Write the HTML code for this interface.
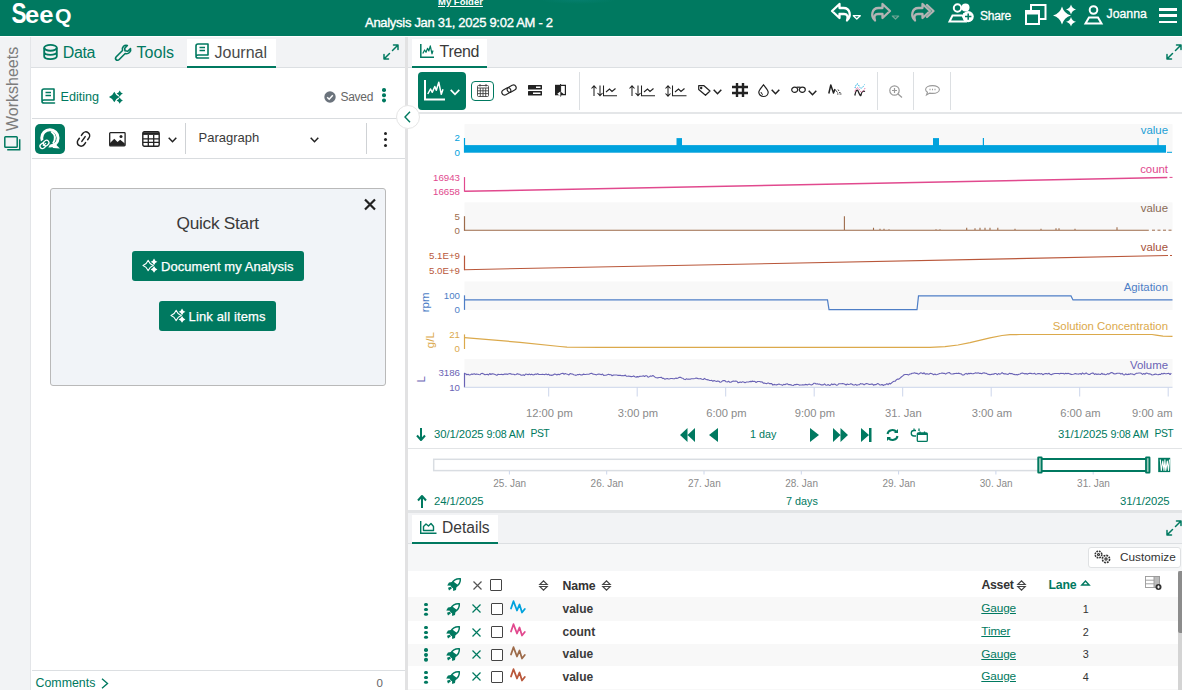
<!DOCTYPE html>
<html lang="en">
<head>
<meta charset="utf-8">
<title>Seeq Analysis</title>
<style>
*{box-sizing:border-box;margin:0;padding:0}
html,body{width:1182px;height:690px;overflow:hidden;background:#fff}
body{font-family:"Liberation Sans",sans-serif;font-size:13px;color:#333;position:relative}
.abs{position:absolute}
.t{position:absolute;white-space:nowrap;line-height:1}
svg{position:absolute;overflow:visible}
#hdr{left:0;top:0;width:1182px;height:36px;background:#007960}
#rail{left:0;top:36px;width:31px;height:654px;background:#f2f3f5;border-right:1px solid #e3e5e8}
#ltabs{left:31px;top:36px;width:375px;height:32px;background:#f2f3f5;border-bottom:1px solid #dcdfe2}
#rtabs{left:409px;top:36px;width:773px;height:32px;background:#f2f3f5;border-bottom:1px solid #dcdfe2}
#dtabs{left:409px;top:512px;width:773px;height:32px;background:#f2f3f5;border-bottom:1px solid #dcdfe2}
.tab{position:absolute;background:#fff;border-bottom:2px solid #007960}
.g{color:#007960}
.tabtxt{font-size:16.5px;color:#007960}
.hl{position:absolute;height:1px;background:#dcdfe2}
.vl{position:absolute;width:1px;background:#dcdfe2}
.btn{position:absolute;background:#007960;border-radius:3px}
.row{position:absolute;left:409px;width:763px;height:23px}
.row.alt{background:#f8f8f8}
</style>
</head>
<body>
<!-- HEADER -->
<div id="hdr" class="abs">
<div class="abs" style="left:540px;top:0;width:76px;height:4px;background:radial-gradient(ellipse 50% 100% at 50% 0,rgba(12,134,128,0.4),rgba(0,121,96,0) 100%)"></div>
<svg width="70" height="30" style="left:10px;top:0" viewBox="0 0 70 30" role="img" aria-label="Seeq"><title>Seeq</title>
<text y="23" font-family="Liberation Sans, sans-serif" font-weight="700" fill="#fff"><tspan x="1.5" font-size="29" textLength="15" lengthAdjust="spacingAndGlyphs">S</tspan><tspan x="15.1" font-size="24.5" textLength="28.5" lengthAdjust="spacingAndGlyphs">ee</tspan><tspan x="45" font-size="20" textLength="16.5" lengthAdjust="spacingAndGlyphs">Q</tspan></text>
</svg>
<div class="t" style="left:438px;top:-3.5px;font-size:9.5px;font-weight:700;color:#fff;text-decoration:underline">My Folder</div>
<div class="t" style="left:365px;top:16.2px;font-size:13px;color:#fff;letter-spacing:-0.29px;-webkit-text-stroke:0.35px #fff">Analysis Jan 31, 2025 9:02 AM - 2</div>
<!-- undo -->
<svg style="left:831px;top:3px" width="31" height="19" viewBox="0 0 31 19" fill="none" stroke="#fff" stroke-width="2.3" stroke-linejoin="round">
<path d="M8.5 1 L1 8 L8.5 15 V11 H13 C16 11 17.5 13 16 17.5 C20.5 13.5 19.5 5 12.5 5 H8.5 Z"/>
<path d="M22.3 12.7 h7 l-3.5 3.3 z" fill="none" stroke="#fff" stroke-width="1.3"/></svg>
<!-- redo -->
<svg style="left:871px;top:3px" width="29" height="19" viewBox="0 0 29 19" fill="none" stroke="#b3b3b3" stroke-width="2.3" stroke-linejoin="round">
<path d="M11.5 1 L19 8 L11.5 15 V11 H7 C4 11 2.5 13 4 17.5 C-0.5 13.5 0.500 5 7.5 5 H11.5 Z"/>
<path d="M21.3 13 h6.4 l-3.2 3 z" fill="none" stroke="#6fa595" stroke-width="1.2"/></svg>
<!-- redo all -->
<svg style="left:911px;top:3px" width="24" height="19" viewBox="0 0 24 19" fill="none" stroke="#b3b3b3" stroke-width="2.3" stroke-linejoin="round">
<path d="M11.500 1 L19 8 L11.500 15 V11 H7 C4 11 2.500 13 4 17.500 C-0.500 13.500 0.500 5 7.500 5 H11.500 Z"/>
<path d="M16 2 L22.500 8 L16 14" stroke-linecap="round"/></svg>
<!-- share -->
<svg style="left:948px;top:3px" width="27" height="21" viewBox="0 0 27 21" fill="none" stroke="#fff" stroke-width="2">
<circle cx="17.500" cy="4.500" r="4" fill="#fff" stroke="none"/>
<path d="M15 10 h6 l1 4 h-6z" fill="#fff" stroke="none"/>
<circle cx="9.500" cy="5" r="3.700"/>
<path d="M4.500 12.500 H14.500 L17.500 18.500 H1.500 Z" fill="#007960"/>
<circle cx="20.2" cy="13.6" r="5.6" fill="#fff" stroke="none"/>
<path d="M17 13.6 h6.4 M20.2 10.4 v6.400" stroke="#007960" stroke-width="1.500"/></svg>
<div class="t" style="left:980px;top:9.5px;font-size:12px;color:#fff;letter-spacing:-0.2px;-webkit-text-stroke:0.3px #fff">Share</div>
<!-- copy -->
<svg style="left:1025px;top:4px" width="22" height="21" viewBox="0 0 22 21" fill="none" stroke="#fff" stroke-width="2">
<path d="M6 6 V1 H20.500 V15 H15"/>
<rect x="1" y="7" width="13" height="13"/>
<path d="M1 9 H14" stroke-width="3"/></svg>
<!-- sparkle -->
<svg style="left:1054px;top:5px" width="22" height="21" viewBox="0 0 22 21" fill="#fff">
<path d="M8 1.5 Q10 8.5 17 10.5 Q10 12.5 8 19.5 Q6 12.5 -1 10.5 Q6 8.5 8 1.5Z"/>
<path d="M17 -0.5 Q18 3.500 22 4.500 Q18 5.500 17 9.5 Q16 5.500 12 4.500 Q16 3.500 17 -0.5Z"/>
<path d="M17 12 Q18 16 22 16.800 Q18 17.700 17 21.5 Q16 17.700 12 16.800 Q16 16 17 12Z"/></svg>
<!-- user -->
<svg style="left:1084px;top:5px" width="19" height="20" viewBox="0 0 19 20" fill="none" stroke="#fff" stroke-width="2">
<circle cx="9.500" cy="5" r="3.800"/>
<path d="M5 12.500 H14 L17.500 18.500 H1.500 Z"/></svg>
<div class="t" style="left:1106.5px;top:8px;font-size:12.3px;color:#fff;-webkit-text-stroke:0.3px #fff">Joanna</div>
<!-- hamburger -->
<div class="abs" style="left:1158.5px;top:8.3px;width:18.5px;height:2.8px;background:#fff"></div>
<div class="abs" style="left:1158.5px;top:14.4px;width:18.5px;height:2.8px;background:#fff"></div>
<div class="abs" style="left:1158.5px;top:20.5px;width:18.5px;height:2.8px;background:#fff"></div>
</div>
<div class="abs" style="left:0;top:36px;width:1182px;height:1px;background:#fff;z-index:5"></div>
<!-- LEFT RAIL -->
<div id="rail" class="abs">
<div class="t" style="left:-29.5px;top:44.5px;width:84px;font-size:16px;color:#7d7d7d;transform:rotate(-90deg);transform-origin:center;text-align:left">Worksheets</div>
<svg style="left:4px;top:100px" width="17" height="15" viewBox="0 0 17 15" fill="none" stroke="#007960" stroke-width="1.500"><rect x="0.800" y="0.800" width="12.400" height="10.400" rx="0.800"/><path d="M15.700 3.200 V13.700 H3.200"/></svg>
</div>
<!-- LEFT PANEL -->
<div id="ltabs" class="abs">
<svg style="left:11.8px;top:8px" width="15" height="16" viewBox="0 0 15 16" fill="none" stroke="#007960" stroke-width="1.85"><ellipse cx="7.500" cy="3.800" rx="6.300" ry="2.900"/><path d="M1.200 3.800 V12.200 C1.200 16 13.800 16 13.800 12.200 V3.800 M1.200 8 C1.200 11.800 13.800 11.800 13.800 8"/></svg>
<div class="t tabtxt" style="left:31.7px;top:8.7px;font-size:16px;letter-spacing:-0.35px">Data</div>
<svg style="left:84px;top:8px" width="17" height="17" viewBox="0 0 17 17" fill="none" stroke="#007960" stroke-width="1.600" stroke-linejoin="round"><path d="M15.500 4.500 L12.800 7.200 L10 6.800 L9.700 4.200 L12.400 1.500 C9.500 0.500 6.500 3 7.500 6.500 L1.500 12.500 C0.300 13.700 0.300 14.800 1 15.600 C1.800 16.500 3.200 16.500 4.200 15.500 L10.200 9.500 C13.500 10.500 16.500 7.500 15.500 4.500Z"/></svg>
<div class="t tabtxt" style="left:105.6px;top:8.7px;font-size:16px">Tools</div>
<div class="tab" style="left:156px;top:3px;width:89px;height:29px"></div>
<svg style="left:164px;top:7px" width="15" height="16" viewBox="0 0 15 16"><path d="M1 12.500 V3 Q1 1 3 1 H13 V12 H3 Q1 12 1 13.500 Q1 15 3 15 H13.500" fill="none" stroke="#007960" stroke-width="1.600" stroke-linejoin="round" stroke-linecap="round"/><path d="M4.500 4.500 H10 M4.500 7.500 H10" stroke="#007960" stroke-width="1.600" fill="none"/></svg>
<div class="t tabtxt" style="left:183.5px;top:8.7px;font-size:16px;color:#4a4a4a">Journal</div>
<svg style="left:352px;top:8px" width="16" height="16" viewBox="0 0 16 16" fill="none" stroke="#007960" stroke-width="1.500" stroke-linecap="round" stroke-linejoin="round"><path d="M9.500 6.500 L15 1 M10.500 1 H15 V5.500 M6.500 9.500 L1 15 M1 10.500 V15 H5.500"/></svg>
</div>
<!-- left panel body -->
<div class="vl" style="left:405px;top:36px;width:3px;height:654px;background:#e2e2e3"></div>
<svg style="left:40.500px;top:87.500px" width="15" height="16" viewBox="0 0 15 16"><path d="M1 12.500 V3 Q1 1 3 1 H13 V12 H3 Q1 12 1 13.500 Q1 15 3 15 H13.500" fill="none" stroke="#007960" stroke-width="1.600" stroke-linejoin="round" stroke-linecap="round"/><path d="M4.500 4.500 H10 M4.500 7.500 H10" stroke="#007960" stroke-width="1.600" fill="none"/></svg>
<div class="t g" style="left:60.5px;top:91px;font-size:12.6px">Editing</div>
<svg style="left:108.500px;top:90.500px" width="14" height="12" viewBox="0 0 22 21"><path d="M8 1.2 Q10.6 7.9 17.3 10.5 Q10.6 13.1 8 19.8 Q5.400 13.1 -1.3 10.5 Q5.400 7.9 8 1.2Z" fill="#007960"/><path d="M17.5 -1 Q18.9 3.1 23 4.5 Q18.9 5.9 17.5 10 Q16.1 5.9 12 4.5 Q16.1 3.1 17.5 -1Z" fill="#007960"/><path d="M17.5 11.5 Q18.9 15.400 23 16.800 Q18.9 18.200 17.5 22.300 Q16.1 18.200 12 16.800 Q16.1 15.400 17.5 11.5Z" fill="#007960"/></svg>
<svg style="left:323.500px;top:90.500px" width="12" height="12" viewBox="0 0 12 12"><circle cx="6" cy="6" r="5.700" fill="#6b737c"/><path d="M3.200 6.200 L5.200 8.200 L8.800 4.200" fill="none" stroke="#fff" stroke-width="1.500"/></svg>
<div class="t" style="left:340.5px;top:91.2px;font-size:12px;letter-spacing:-0.3px;color:#666">Saved</div>
<div class="abs" style="left:382px;top:88.200px;width:3.600px;height:3.600px;border-radius:50%;background:#007960;box-shadow:0 5.200px 0 #007960,0 10.400px 0 #007960"></div>
<div class="hl" style="left:32px;top:118px;width:373px;background:#d9dcdf"></div>
<div class="btn" style="left:35px;top:124px;width:30px;height:30px;border-radius:5px"></div>
<svg style="left:35px;top:124px" width="30" height="30" viewBox="0 0 30 30" fill="none" stroke="#fff"><circle cx="14.9" cy="13.9" r="8.2" stroke-width="2.9"/><path d="M16.3 7.6 Q22.6 12.5 18 19.5" stroke-width="1.9"/><path d="M15.5 20.8 L19.5 19 L24.8 24.6 L18.2 24 Z" fill="#fff" stroke="none"/><g transform="rotate(-40 10 20)"><rect x="4" y="17" width="9.5" height="6" rx="3" fill="#007960" stroke="#007960" stroke-width="3"/><rect x="4.200" y="17.600" width="5.800" height="4.800" rx="2.400" stroke-width="1.300"/><rect x="8.600" y="17.600" width="5.800" height="4.800" rx="2.400" stroke-width="1.300" fill="#007960"/><path d="M7.200 20 H11.400" stroke-width="1.200"/></g></svg>
<svg style="left:74.500px;top:130px" width="17" height="18" viewBox="0 0 17 18" fill="none" stroke="#222" stroke-width="1.500" stroke-linecap="round"><g transform="rotate(-55 8.500 9)"><path d="M6.700 5.200 H4.400 A3.800 3.800 0 0 0 4.400 12.800 H6.700 M10.300 5.200 H12.600 A3.800 3.800 0 0 1 12.600 12.800 H10.300"/><path d="M5.600 9 H11.400"/></g></svg>
<svg style="left:108.500px;top:131.800px" width="17" height="15" viewBox="0 0 17 15"><rect x="0.700" y="0.700" width="15.400" height="13.200" rx="0.800" fill="none" stroke="#222" stroke-width="1.300"/><path d="M1 13.700 V11 L5.300 6.800 L8.500 10 L11.200 7.800 L15.800 11.600 V13.700Z" fill="#222"/><circle cx="12" cy="4.600" r="1.500" fill="#222"/></svg>
<svg style="left:142px;top:131px" width="18" height="16" viewBox="0 0 18 16" fill="none" stroke="#222"><rect x="0.8" y="0.8" width="16.4" height="14.4" rx="1.5" stroke-width="1.4"/><path d="M1 2.6 H17" stroke-width="2.6"/><path d="M1 7.800 H17 M1 11.400 H17 M6.300 4 V15 M11.700 4 V15" stroke-width="1.300"/></svg>
<svg style="left:167.500px;top:137px" width="9" height="6" viewBox="0 0 9 6" fill="none" stroke="#222" stroke-width="1.500"><path d="M0.700 0.700 L4.500 4.700 L8.300 0.700"/></svg>
<div class="vl" style="left:185px;top:123px;height:31px;background:#cfd2d5"></div>
<div class="t" style="left:198.500px;top:131px;font-size:13px;color:#3a3a3a">Paragraph</div>
<svg style="left:309.500px;top:137px" width="9" height="6" viewBox="0 0 9 6" fill="none" stroke="#222" stroke-width="1.500"><path d="M0.700 0.700 L4.500 4.700 L8.300 0.700"/></svg>
<div class="vl" style="left:366px;top:123px;height:31px;background:#cfd2d5"></div>
<div class="abs" style="left:384px;top:132px;width:3px;height:3px;border-radius:50%;background:#222;box-shadow:0 6px 0 #222,0 12px 0 #222"></div>
<div class="hl" style="left:32px;top:158px;width:373px;background:#d9dcdf"></div>
<!-- quick start -->
<div class="abs" style="left:50px;top:188px;width:336px;height:198px;background:#f1f4f8;border:1px solid #b9b9b9;border-radius:3px"></div>
<svg style="left:364px;top:198.500px" width="12" height="11" viewBox="0 0 12 11" stroke="#222" stroke-width="2.200"><path d="M1 0.500 L11 10.500 M11 0.500 L1 10.500"/></svg>
<div class="t" style="left:176.5px;top:215px;font-size:17.3px;letter-spacing:-0.28px;color:#3a3a3a">Quick Start</div>
<div class="btn" style="left:132px;top:251px;width:172px;height:30px"></div>
<svg style="left:143px;top:259px" width="14" height="13" viewBox="0 0 22 21"><path d="M8 2.2 Q10.3 8.2 16.3 10.5 Q10.3 12.8 8 18.8 Q5.700 12.8 -0.3 10.5 Q5.700 8.2 8 2.2Z" fill="none" stroke="#fff" stroke-width="2" stroke-linejoin="round"/><path d="M17.5 -1 Q18.9 3.1 23 4.5 Q18.9 5.9 17.5 10 Q16.1 5.9 12 4.5 Q16.1 3.1 17.5 -1Z" fill="#fff"/><path d="M17.5 11.5 Q18.9 15.400 23 16.800 Q18.9 18.200 17.5 22.300 Q16.1 18.200 12 16.800 Q16.1 15.400 17.5 11.5Z" fill="#fff"/></svg>
<div class="t" style="left:161px;top:259.500px;font-size:13px;color:#fff;-webkit-text-stroke:0.250px #fff;letter-spacing:0.050px">Document my Analysis</div>
<div class="btn" style="left:159px;top:301px;width:117px;height:30px"></div>
<svg style="left:170.500px;top:309px" width="14" height="13" viewBox="0 0 22 21"><path d="M8 2.2 Q10.3 8.2 16.3 10.5 Q10.3 12.8 8 18.8 Q5.700 12.8 -0.3 10.5 Q5.700 8.2 8 2.2Z" fill="none" stroke="#fff" stroke-width="2" stroke-linejoin="round"/><path d="M17.5 -1 Q18.9 3.1 23 4.5 Q18.9 5.9 17.5 10 Q16.1 5.9 12 4.5 Q16.1 3.1 17.5 -1Z" fill="#fff"/><path d="M17.5 11.5 Q18.9 15.400 23 16.800 Q18.9 18.200 17.5 22.300 Q16.1 18.200 12 16.800 Q16.1 15.400 17.5 11.5Z" fill="#fff"/></svg>
<div class="t" style="left:188.500px;top:309.500px;font-size:13px;color:#fff;-webkit-text-stroke:0.250px #fff;letter-spacing:0.150px">Link all items</div>
<!-- comments -->
<div class="hl" style="left:32px;top:669.500px;width:373px;height:1.500px;background:#dcdfe2"></div>
<div class="t g" style="left:35.500px;top:676.500px;font-size:12.400px">Comments</div>
<svg style="left:101px;top:678px" width="8" height="11" viewBox="0 0 8 11" fill="none" stroke="#007960" stroke-width="1.400"><path d="M1 0.700 L6.500 5.500 L1 10.300"/></svg>
<div class="t" style="left:376.500px;top:677.500px;font-size:11.500px;color:#666">0</div>
<!-- collapse circle -->
<div class="abs" style="left:395.5px;top:104.5px;width:24px;height:24px;border-radius:50%;background:#fff;border:1px solid #e6e6e6;z-index:6"></div>
<svg style="left:404px;top:110.5px;z-index:7" width="7" height="12" viewBox="0 0 7 12" fill="none" stroke="#007960" stroke-width="1.400"><path d="M6 0.700 L1 6 L6 11.300"/></svg>

<!-- RIGHT PANEL -->
<!--RIGHT-->
<div id="rtabs" class="abs" style="left:408px;width:774px">
<div class="tab" style="left:4px;top:3px;width:75px;height:29px"></div>
<svg style="left:12px;top:8px" width="14" height="14" viewBox="0 0 14 14" fill="none" stroke="#007960" stroke-width="1.500"><path d="M0.800 0 V13.200 H14"/><path d="M2.800 9.500 L4.600 6 L6 8.300 L7.600 4.300 L8.800 7 L10.300 1.800 L12 9.800 L13 6.500" stroke-width="1.200" stroke-linejoin="round"/></svg>
<div class="t tabtxt" style="left:31.500px;top:8.200px;font-size:16px;letter-spacing:-0.300px;color:#3a3a3a">Trend</div>
<svg style="left:757.500px;top:8px" width="16" height="16" viewBox="0 0 16 16" fill="none" stroke="#007960" stroke-width="1.500" stroke-linecap="round" stroke-linejoin="round"><path d="M9.500 6.500 L15 1 M10.500 1 H15 V5.500 M6.500 9.500 L1 15 M1 10.500 V15 H5.500"/></svg>
</div>
<div class="btn" style="left:418px;top:72px;width:48px;height:38px;border-radius:4px"></div>
<svg style="left:423.500px;top:80px" width="21" height="21" viewBox="0 0 21 21" fill="none" stroke="#fff" stroke-width="2"><path d="M1 0 V19.500 H21"/><path d="M3.800 14 L6.500 9 L8.300 12.300 L10.800 6.500 L12.300 10.300 L14.800 2.300 L17.300 14.300 L19 9.300" stroke-width="1.500" stroke-linejoin="round"/></svg>
<svg style="left:449.500px;top:88.500px" width="10" height="7" viewBox="0 0 10 7" fill="none" stroke="#fff" stroke-width="1.700"><path d="M0.700 0.800 L5 5.300 L9.300 0.800"/></svg>
<div class="abs" style="left:471px;top:81px;width:23px;height:20px;border:1px solid #007960;border-radius:4px"></div>
<svg style="left:476.500px;top:84px" width="12" height="13" viewBox="0 0 12 13" fill="none" stroke="#3a3a3a" stroke-width="0.850"><rect x="0.500" y="1.500" width="11" height="11" rx="1"/><path d="M0.500 4 H11.500 M0.500 6.800 H11.500 M0.500 9.600 H11.500 M3.300 4 V12.500 M6 4 V12.500 M8.700 4 V12.500 M3 0 V2.500 M9 0 V2.500"/></svg>
<svg style="left:500.500px;top:83px" width="16" height="14" viewBox="0 0 16 14" fill="none" stroke="#222" stroke-width="1.150" stroke-linecap="round"><g transform="rotate(-28 8 7)"><rect x="0.300" y="4.300" width="9.400" height="5.400" rx="2.700"/><rect x="6.300" y="4.300" width="9.400" height="5.400" rx="2.700"/></g></svg>
<svg style="left:527.500px;top:85px" width="14" height="11" viewBox="0 0 14 11"><rect x="0" y="0" width="14" height="4.500" rx="0.500" fill="#222"/><rect x="0" y="6" width="14" height="4.500" rx="0.500" fill="#222"/><rect x="8" y="1.500" width="4.500" height="1.500" fill="#fff"/><rect x="5" y="7.500" width="7.500" height="1.500" fill="#fff"/></svg>
<svg style="left:554.500px;top:84px" width="12" height="13" viewBox="0 0 12 13"><rect x="0" y="0.800" width="5.500" height="10.500" fill="#222"/><path d="M6 1.400 H10.400 V10.700 H6" fill="none" stroke="#222" stroke-width="1.200"/><path d="M5.600 0 V12.500" stroke="#222" stroke-width="1"/><path d="M5.300 7.500 L2.300 9.700 L5.300 11.900Z" fill="#fff"/><path d="M8.500 9.700 L6 8 V11.400Z" fill="#222"/></svg>
<div class="vl" style="left:579px;top:72px;height:38px"></div>
<svg style="left:591px;top:85px" width="26" height="12" viewBox="0 0 26 12" fill="none" stroke="#222" stroke-width="1.050"><path d="M3 11 V1 M0.500 3.500 L3 0.800 L5.500 3.500"/><path d="M9 0.500 V10.500 M6.500 8 L9 10.700 L11.500 8"/><path d="M12.500 0.500 V10.800 H26"/><path d="M15 7 L18.500 4 L21 6.500 L24.500 3.500" stroke-width="1.100"/></svg>
<svg style="left:628.5px;top:85px" width="26" height="12" viewBox="0 0 26 12" fill="none" stroke="#222" stroke-width="1.050"><path d="M3 11 V1 M0.500 3.500 L3 0.800 L5.500 3.500"/><path d="M9 0.500 V10.500 M6.500 8 L9 10.700 L11.500 8"/><path d="M12.500 0.500 V10.800 H26"/><path d="M15 7 L18.500 4 L21 6.500 L24.500 3.500" stroke-width="1.100"/></svg>
<svg style="left:665px;top:85px" width="22" height="12" viewBox="0 0 22 12" fill="none" stroke="#222" stroke-width="1.050"><path d="M3 1 V11 M0.500 3.500 L3 0.800 L5.500 3.500 M0.500 8.500 L3 11.200 L5.500 8.500"/><path d="M7.500 0.500 V10.800 H21.500"/><path d="M10 7 L13.500 4 L16 6.500 L19.500 3.500" stroke-width="1.100"/></svg>
<svg style="left:697.500px;top:84.500px" width="13" height="11" viewBox="0 0 13 11" fill="none" stroke="#222" stroke-width="1.200" stroke-linejoin="round"><path d="M0.700 0.700 H6 L12 6 L7.500 10.300 L0.700 4.500Z"/><circle cx="3.200" cy="3" r="0.600" fill="#222"/></svg>
<svg style="left:712.5px;top:88.5px" width="9" height="6" viewBox="0 0 9 6" fill="none" stroke="#222" stroke-width="1.500"><path d="M0.700 0.700 L4.500 4.700 L8.300 0.700"/></svg>
<svg style="left:731.500px;top:83px" width="16" height="14" viewBox="0 0 16 14" fill="none" stroke="#222" stroke-width="2.400"><path d="M5 0 V14 M11 0 V14 M0 4 H16 M0 10 H16"/></svg>
<svg style="left:758px;top:83.500px" width="11" height="13" viewBox="0 0 11 13" fill="none" stroke="#222" stroke-width="1.200"><path d="M5.500 0.800 C8 4 10.200 6 10.200 8.300 A4.700 4.200 0 0 1 0.800 8.300 C0.800 6 3 4 5.500 0.800Z"/><path d="M3 8 Q3 10 5 10.500" stroke-width="1"/></svg>
<svg style="left:771px;top:89px" width="9" height="6" viewBox="0 0 9 6" fill="none" stroke="#222" stroke-width="1.500"><path d="M0.700 0.700 L4.500 4.700 L8.300 0.700"/></svg>
<svg style="left:791px;top:86px" width="15" height="7" viewBox="0 0 15 7" fill="none" stroke="#222" stroke-width="1.200"><ellipse cx="3.700" cy="3.800" rx="3" ry="2.600"/><ellipse cx="11.300" cy="3.800" rx="3" ry="2.600"/><path d="M5.500 1.200 H9.500"/></svg>
<svg style="left:808px;top:90px" width="9" height="6" viewBox="0 0 9 6" fill="none" stroke="#222" stroke-width="1.500"><path d="M0.700 0.700 L4.500 4.700 L8.300 0.700"/></svg>
<svg style="left:828px;top:84px" width="14" height="12" viewBox="0 0 14 12" fill="none" stroke="#222"><path d="M0.800 9.500 L2.800 1 L5.500 9 L7 5" stroke-width="1.500" stroke-linejoin="round"/><path d="M7.500 6 L9.500 8.500 M10 5.500 L11 7 M9 10 H10.500 M11.500 10 H13.500 M11 8.500 L12.500 8.500" stroke-width="1" stroke="#444"/></svg>
<svg style="left:854px;top:83px" width="12" height="14" viewBox="0 0 12 14" fill="none"><path d="M1 5 Q3 -2 5 3 T10.500 1.500" stroke="#00a2dd" stroke-width="1" stroke-dasharray="1.200 1"/><path d="M0.800 12.500 Q2.500 4 4.500 9 T7 12 Q8 7 11 8.500" stroke="#222" stroke-width="1.300"/><path d="M1 8.500 Q3 2 5.500 7 T11 5" stroke="#e1498e" stroke-width="1" stroke-dasharray="1.200 1"/></svg>
<div class="vl" style="left:877px;top:72px;height:38px"></div>
<svg style="left:889px;top:84.500px" width="14" height="13" viewBox="0 0 14 13" fill="none" stroke="#9a9a9a" stroke-width="1.200"><circle cx="5.500" cy="5.500" r="4.700"/><path d="M9 9 L13 12.500 M3 5.500 H8 M5.500 3 V8"/></svg>
<div class="vl" style="left:913px;top:72px;height:38px"></div>
<svg style="left:925px;top:85px" width="15" height="11" viewBox="0 0 15 11" fill="none" stroke="#9a9a9a" stroke-width="1.100"><path d="M7.500 0.600 C11.500 0.600 14.400 2.300 14.400 4.500 C14.400 6.700 11.500 8.400 7.500 8.400 C6.500 8.400 5.500 8.300 4.700 8.100 L1.500 10 L2.500 7.300 C1.300 6.600 0.600 5.600 0.600 4.500 C0.600 2.300 3.500 0.600 7.500 0.600Z"/><path d="M4.500 4.500 H5.500 M7 4.500 H8 M9.500 4.500 H10.500" stroke-width="1.300"/></svg>
<div class="vl" style="left:950px;top:72px;height:38px"></div>
<div class="hl" style="left:408px;top:111.500px;width:774px;height:2px;background:#e4e6e8"></div>
<svg style="left:0;top:0" width="1182" height="690" viewBox="0 0 1182 690" font-family="Liberation Sans, sans-serif">
<rect x="464.5" y="124.1" width="708.0" height="28.700" fill="#f8f8f8"/>
<rect x="464.5" y="202.3" width="708.0" height="28.700" fill="#f8f8f8"/>
<rect x="464.5" y="281.4" width="708.0" height="28.700" fill="#f8f8f8"/>
<rect x="464.5" y="358.9" width="708.0" height="28.700" fill="#f8f8f8"/>
<path d="M464.5 138.0 V152.6" stroke="#00a2dd" stroke-width="1.200" fill="none"/>
<text x="460" y="141.4" font-size="9.700" fill="#00a2dd" text-anchor="end">2</text>
<text x="460" y="156.0" font-size="9.700" fill="#00a2dd" text-anchor="end">0</text>
<text x="1168" y="133.8" font-size="11.400" fill="#1a9fd6" text-anchor="end">value</text>
<path d="M464.5 177.1 V191.7" stroke="#e1498e" stroke-width="1.200" fill="none"/>
<text x="460" y="180.5" font-size="9.700" fill="#e1498e" text-anchor="end">16943</text>
<text x="460" y="195.1" font-size="9.700" fill="#e1498e" text-anchor="end">16658</text>
<text x="1168" y="172.9" font-size="11.400" fill="#e1498e" text-anchor="end">count</text>
<path d="M464.5 216.2 V230.8" stroke="#9d6b4a" stroke-width="1.200" fill="none"/>
<text x="460" y="219.6" font-size="9.700" fill="#9d6b4a" text-anchor="end">5</text>
<text x="460" y="234.2" font-size="9.700" fill="#9d6b4a" text-anchor="end">0</text>
<text x="1168" y="212.0" font-size="11.400" fill="#8a6a55" text-anchor="end">value</text>
<path d="M464.5 255.6 V270.2" stroke="#b9573a" stroke-width="1.200" fill="none"/>
<text x="460" y="259.0" font-size="9.700" fill="#b9573a" text-anchor="end">5.1E+9</text>
<text x="460" y="273.6" font-size="9.700" fill="#b9573a" text-anchor="end">5.0E+9</text>
<text x="1168" y="251.4" font-size="11.400" fill="#a5523a" text-anchor="end">value</text>
<path d="M464.5 295.3 V309.9" stroke="#4e7ec6" stroke-width="1.200" fill="none"/>
<text x="460" y="298.7" font-size="9.700" fill="#4e7ec6" text-anchor="end">100</text>
<text x="460" y="313.3" font-size="9.700" fill="#4e7ec6" text-anchor="end">0</text>
<text x="1168" y="291.1" font-size="11.400" fill="#4e7ec6" text-anchor="end">Agitation</text>
<text transform="translate(429 302.4) rotate(-90)" font-size="11.500" fill="#4e7ec6" text-anchor="middle">rpm</text>
<path d="M464.5 334.4 V349.0" stroke="#dba94b" stroke-width="1.200" fill="none"/>
<text x="460" y="337.8" font-size="9.700" fill="#dba94b" text-anchor="end">21</text>
<text x="460" y="352.4" font-size="9.700" fill="#dba94b" text-anchor="end">0</text>
<text x="1168" y="330.2" font-size="11.400" fill="#dba94b" text-anchor="end">Solution Concentration</text>
<text transform="translate(434.2 340.2) rotate(-90)" font-size="11.500" fill="#dba94b" text-anchor="middle">g/L</text>
<path d="M464.5 372.8 V387.4" stroke="#6a63b5" stroke-width="1.200" fill="none"/>
<text x="460" y="376.2" font-size="9.700" fill="#6a63b5" text-anchor="end">3186</text>
<text x="460" y="390.8" font-size="9.700" fill="#6a63b5" text-anchor="end">10</text>
<text x="1168" y="368.6" font-size="11.400" fill="#6a63b5" text-anchor="end">Volume</text>
<text transform="translate(424.6 379.3) rotate(-90)" font-size="11.500" fill="#6a63b5" text-anchor="middle">L</text>
<rect x="464.5" y="145.1" width="701.5" height="7.600" fill="#00a2dd"/>
<rect x="676.500" y="138.1" width="5.500" height="8" fill="#00a2dd"/>
<rect x="933" y="138.1" width="6" height="8" fill="#00a2dd"/>
<path d="M983.400 138.1 v8 M1158 138.1 v8" stroke="#00a2dd" stroke-width="1.200"/>
<path d="M1167 152.3 h5" stroke="#00a2dd" stroke-width="1"/>
<path d="M464.5 191.3 L1167.300 177.5" stroke="#e1498e" stroke-width="1.500" fill="none"/>
<path d="M1169.500 177.4 h3" stroke="#e1498e" stroke-width="1"/>
<path d="M464.5 230.2 H844.400 V216.2 V230.2 H873.5 v-2.5 v2.5 H880 v-1.5 v1.5 H884 v-1.5 v1.5 H889 v-1 v1 H936 v-1 v1 H940 v-1 v1 H966.7 v-2.5 v2.5 H975 v-2 v2 H980 v-2.5 v2.5 H985 v-2.5 v2.5 H990 v-2.5 v2.5 H997.8 v-2.5 v2.5 H1015 v-1.5 v1.5 H1041 v-1.5 v1.5 H1056 v-2 v2 H1059 v-2 v2 H1075 v-1.5 v1.5 H1117 v-3 v3 H1148.800" stroke="#9d6b4a" stroke-width="1.100" fill="none"/>
<path d="M1152 230.2 H1172" stroke="#9d6b4a" stroke-width="1" stroke-dasharray="3 2.500"/>
<path d="M464.5 269.7 L1168 255.6" stroke="#b9573a" stroke-width="1.050" fill="none"/>
<path d="M1170 255.5 h2" stroke="#b9573a" stroke-width="1"/>
<path d="M464.5 299.9 H827.500 L829 309.7 H917 L918.500 295.9 H1071 L1073 299.9 H1172.5" stroke="#4e7ec6" stroke-width="1.200" fill="none"/>
<path d="M464.5 337.7 L520.0 342.3 L560.0 346.5 L567.0 347.1 L600.0 347.3 L930.0 347.3 L945.0 346.7 L958.0 345.0 L970.0 342.7 L990.0 337.8 L1002.0 335.5 L1010.0 334.7 L1020.0 334.5 L1152.0 334.5 L1156.0 335.1 L1163.0 336.2 L1172.5 336.3" stroke="#dba94b" stroke-width="1.200" fill="none"/>
<path d="M464.5 373.81 L465.7 373.76 L466.9 374.81 L468.1 374.31 L469.3 375.06 L470.5 374.68 L471.7 373.97 L472.9 374.37 L474.1 373.67 L475.3 374.38 L476.5 374.08 L477.7 374.20 L478.9 374.52 L480.1 374.75 L481.3 373.43 L482.5 373.41 L483.7 374.06 L484.9 374.77 L486.1 374.51 L487.3 374.34 L488.5 375.03 L489.7 373.51 L490.9 374.52 L492.1 373.82 L493.3 373.92 L494.5 374.23 L495.7 374.72 L496.9 375.39 L498.1 374.27 L499.3 374.56 L500.5 374.52 L501.7 374.23 L502.9 374.69 L504.1 374.17 L505.3 374.13 L506.5 374.06 L507.7 374.37 L508.9 373.75 L510.1 373.57 L511.3 374.15 L512.5 374.24 L513.7 374.18 L514.9 374.83 L516.1 374.50 L517.3 373.67 L518.5 374.12 L519.7 374.27 L520.9 375.12 L522.1 375.22 L523.3 374.68 L524.5 375.50 L525.7 374.02 L526.9 374.24 L528.1 374.72 L529.3 374.06 L530.5 374.74 L531.7 374.17 L532.9 374.88 L534.1 374.67 L535.3 374.07 L536.5 374.35 L537.7 373.67 L538.9 374.46 L540.1 374.54 L541.3 374.57 L542.5 374.24 L543.7 374.55 L544.9 374.59 L546.1 374.05 L547.3 374.64 L548.5 374.15 L549.7 375.24 L550.9 375.11 L552.1 375.36 L553.3 374.88 L554.5 374.04 L555.7 374.30 L556.9 374.93 L558.1 374.17 L559.3 374.72 L560.5 374.02 L561.7 373.59 L562.9 373.26 L564.1 374.24 L565.3 373.55 L566.5 373.98 L567.7 374.30 L568.9 374.89 L570.1 373.56 L571.3 373.89 L572.5 374.05 L573.7 374.76 L574.9 375.04 L576.1 375.39 L577.3 374.63 L578.5 374.66 L579.7 374.32 L580.9 374.89 L582.1 375.04 L583.3 374.12 L584.5 374.37 L585.7 374.49 L586.9 374.29 L588.1 374.28 L589.3 374.11 L590.5 373.53 L591.7 373.29 L592.9 374.12 L594.1 374.24 L595.3 374.52 L596.5 374.87 L597.7 374.27 L598.9 373.94 L600.1 374.23 L601.3 374.65 L602.5 374.12 L603.7 375.48 L604.9 375.25 L606.1 375.15 L607.3 374.82 L608.5 374.29 L609.7 374.66 L610.9 374.69 L612.1 375.78 L613.3 375.09 L614.5 375.00 L615.7 375.03 L616.9 374.95 L618.1 375.40 L619.3 375.22 L620.5 375.40 L621.7 375.72 L622.9 375.55 L624.1 375.69 L625.3 375.06 L626.5 376.31 L627.7 376.23 L628.9 375.96 L630.1 376.40 L631.3 376.60 L632.5 376.47 L633.7 375.91 L634.9 376.81 L636.1 377.12 L637.3 376.63 L638.5 376.89 L639.7 376.37 L640.9 376.19 L642.1 376.18 L643.3 375.79 L644.5 376.49 L645.7 375.71 L646.9 375.78 L648.1 377.26 L649.3 376.65 L650.5 375.92 L651.7 376.26 L652.9 375.48 L654.1 376.37 L655.3 377.41 L656.5 377.79 L657.7 377.92 L658.9 377.43 L660.1 377.55 L661.3 377.28 L662.5 378.33 L663.7 378.39 L664.9 379.19 L666.1 378.71 L667.3 378.45 L668.5 378.96 L669.7 378.85 L670.9 378.47 L672.1 378.45 L673.3 378.68 L674.5 378.79 L675.7 378.12 L676.9 378.38 L678.1 377.90 L679.3 377.28 L680.5 377.34 L681.7 377.99 L682.9 378.33 L684.1 379.20 L685.3 379.59 L686.5 378.71 L687.7 379.18 L688.9 379.16 L690.1 379.24 L691.3 378.68 L692.5 378.69 L693.7 378.71 L694.9 378.43 L696.1 378.09 L697.3 378.39 L698.5 378.71 L699.7 378.78 L700.9 378.64 L702.1 379.19 L703.3 379.49 L704.5 378.43 L705.7 379.18 L706.9 379.65 L708.1 379.84 L709.3 380.33 L710.5 380.45 L711.7 380.34 L712.9 381.21 L714.1 380.45 L715.3 381.04 L716.5 381.41 L717.7 380.92 L718.9 381.29 L720.1 382.26 L721.3 381.91 L722.5 380.90 L723.7 380.59 L724.9 380.54 L726.1 381.75 L727.3 381.92 L728.5 381.24 L729.7 382.21 L730.9 382.24 L732.1 381.53 L733.3 380.94 L734.5 381.31 L735.7 381.02 L736.9 381.23 L738.1 382.80 L739.3 382.36 L740.5 382.01 L741.7 382.38 L742.9 381.63 L744.1 382.41 L745.3 382.63 L746.5 381.98 L747.7 382.03 L748.9 381.84 L750.1 381.41 L751.3 381.63 L752.5 381.13 L753.7 381.52 L754.9 381.34 L756.1 382.53 L757.3 381.64 L758.5 381.53 L759.7 381.47 L760.9 382.06 L762.1 381.83 L763.3 383.12 L764.5 383.08 L765.7 383.47 L766.9 383.58 L768.1 382.89 L769.3 383.59 L770.5 383.49 L771.7 383.59 L772.9 385.07 L774.1 384.39 L775.3 384.76 L776.5 384.88 L777.7 384.41 L778.9 384.03 L780.1 384.48 L781.3 384.84 L782.5 385.36 L783.7 384.35 L784.9 384.73 L786.1 383.97 L787.3 383.83 L788.5 384.59 L789.7 384.49 L790.9 384.88 L792.1 385.32 L793.3 385.48 L794.5 384.59 L795.7 384.61 L796.9 384.41 L798.1 384.58 L799.3 385.09 L800.5 384.94 L801.7 385.01 L802.9 384.67 L804.1 384.96 L805.3 384.38 L806.5 384.60 L807.7 384.86 L808.9 384.11 L810.1 384.59 L811.3 384.97 L812.5 384.53 L813.7 383.31 L814.9 383.27 L816.1 383.94 L817.3 383.77 L818.5 384.29 L819.7 384.13 L820.9 384.83 L822.1 384.78 L823.3 384.84 L824.5 383.91 L825.7 384.98 L826.9 385.17 L828.1 384.53 L829.3 385.39 L830.5 385.18 L831.7 383.82 L832.9 384.72 L834.1 384.04 L835.3 384.37 L836.5 385.21 L837.7 384.92 L838.9 383.72 L840.1 383.81 L841.3 383.79 L842.5 383.65 L843.7 383.76 L844.9 384.27 L846.1 385.01 L847.3 383.97 L848.5 384.52 L849.7 384.20 L850.9 383.63 L852.1 384.30 L853.3 385.01 L854.5 385.04 L855.7 384.36 L856.9 385.38 L858.1 384.76 L859.3 384.80 L860.5 383.59 L861.7 383.99 L862.9 383.86 L864.1 384.92 L865.3 384.01 L866.5 383.51 L867.7 383.69 L868.9 384.36 L870.1 384.47 L871.3 384.03 L872.5 384.13 L873.7 385.25 L874.9 384.61 L876.1 384.59 L877.3 383.67 L878.5 383.78 L879.7 384.96 L880.9 384.86 L882.1 384.44 L883.3 385.47 L884.5 384.71 L885.7 384.65 L886.9 383.55 L888.1 384.71 L889.3 383.29 L890.5 383.98 L891.7 382.78 L892.9 381.81 L894.1 381.28 L895.3 381.16 L896.5 379.72 L897.7 379.04 L898.9 379.11 L900.1 378.05 L901.3 376.99 L902.5 376.06 L903.7 374.97 L904.9 374.44 L906.1 374.52 L907.3 374.54 L908.5 375.06 L909.7 374.05 L910.9 373.99 L912.1 373.21 L913.3 373.26 L914.5 372.84 L915.7 373.35 L916.9 373.19 L918.1 374.19 L919.3 373.71 L920.5 372.88 L921.7 373.05 L922.9 373.71 L924.1 372.79 L925.3 374.12 L926.5 373.81 L927.7 373.91 L928.9 374.22 L930.1 373.41 L931.3 373.54 L932.5 373.98 L933.7 374.71 L934.9 374.08 L936.1 374.82 L937.3 374.45 L938.5 374.03 L939.7 373.44 L940.9 373.30 L942.1 373.04 L943.3 373.34 L944.5 373.34 L945.7 374.13 L946.9 373.15 L948.1 372.72 L949.3 372.50 L950.5 373.70 L951.7 374.05 L952.9 374.06 L954.1 373.63 L955.3 373.47 L956.5 373.34 L957.7 373.46 L958.9 373.13 L960.1 373.82 L961.3 373.89 L962.5 375.03 L963.7 374.96 L964.9 374.08 L966.1 373.35 L967.3 374.21 L968.5 373.36 L969.7 373.62 L970.9 373.28 L972.1 373.76 L973.3 373.64 L974.5 373.34 L975.7 372.70 L976.9 373.16 L978.1 372.71 L979.3 373.39 L980.5 373.34 L981.7 373.75 L982.9 373.07 L984.1 372.87 L985.3 373.26 L986.5 373.38 L987.7 374.21 L988.9 374.39 L990.1 374.74 L991.3 374.40 L992.5 374.17 L993.7 374.17 L994.9 373.46 L996.1 373.53 L997.3 374.65 L998.5 373.53 L999.7 374.16 L1000.9 373.72 L1002.1 372.59 L1003.3 373.60 L1004.5 373.84 L1005.7 373.77 L1006.9 374.18 L1008.1 374.36 L1009.3 373.29 L1010.5 373.63 L1011.7 373.51 L1012.9 374.10 L1014.1 374.37 L1015.3 374.72 L1016.5 374.54 L1017.7 374.87 L1018.9 374.29 L1020.1 374.03 L1021.3 373.26 L1022.5 373.08 L1023.7 373.43 L1024.9 373.88 L1026.1 373.44 L1027.3 374.18 L1028.5 373.46 L1029.7 373.35 L1030.9 373.39 L1032.1 373.72 L1033.3 373.75 L1034.5 373.23 L1035.7 374.29 L1036.9 374.02 L1038.1 373.52 L1039.3 373.59 L1040.5 374.01 L1041.7 373.53 L1042.9 374.72 L1044.1 374.07 L1045.3 373.60 L1046.5 373.57 L1047.7 374.02 L1048.9 373.30 L1050.1 374.23 L1051.3 374.75 L1052.5 374.10 L1053.7 373.74 L1054.9 373.53 L1056.1 373.52 L1057.3 373.56 L1058.5 373.52 L1059.7 373.85 L1060.9 373.29 L1062.1 373.43 L1063.3 373.42 L1064.5 373.90 L1065.7 373.22 L1066.9 373.75 L1068.1 373.30 L1069.3 373.69 L1070.5 374.12 L1071.7 374.57 L1072.9 374.32 L1074.1 374.04 L1075.3 373.43 L1076.5 373.87 L1077.7 374.01 L1078.9 374.13 L1080.1 373.53 L1081.3 374.31 L1082.5 372.99 L1083.7 373.89 L1084.9 373.89 L1086.1 372.86 L1087.3 373.75 L1088.5 374.38 L1089.7 374.50 L1090.9 373.57 L1092.1 373.17 L1093.3 373.14 L1094.5 374.45 L1095.7 373.78 L1096.9 374.54 L1098.1 373.92 L1099.3 374.24 L1100.5 374.56 L1101.7 373.25 L1102.9 374.26 L1104.1 374.02 L1105.3 374.73 L1106.5 374.47 L1107.7 373.58 L1108.9 374.16 L1110.1 373.30 L1111.3 372.59 L1112.5 372.74 L1113.7 373.71 L1114.9 373.85 L1116.1 373.64 L1117.3 373.23 L1118.5 373.31 L1119.7 373.23 L1120.9 374.15 L1122.1 373.33 L1123.3 374.69 L1124.5 374.94 L1125.7 373.80 L1126.9 374.66 L1128.1 374.14 L1129.3 374.36 L1130.5 373.66 L1131.7 373.99 L1132.9 374.12 L1134.1 374.83 L1135.3 373.93 L1136.5 373.27 L1137.7 373.18 L1138.9 373.05 L1140.1 372.98 L1141.3 373.31 L1142.5 374.42 L1143.7 373.53 L1144.9 374.22 L1146.1 373.12 L1147.3 373.23 L1148.5 373.87 L1149.7 373.78 L1150.9 374.27 L1152.1 375.07 L1153.3 374.74 L1154.5 374.38 L1155.7 374.00 L1156.9 374.48 L1158.1 374.74 L1159.3 374.37 L1160.5 374.57 L1161.7 373.38 L1162.9 373.97 L1164.1 373.30 L1165.3 373.69 L1166.5 373.72 L1167.7 373.49 L1168.9 373.32 L1170.1 374.51 L1171.3 373.18" stroke="#6a63b5" stroke-width="1.100" fill="none" stroke-linejoin="round"/>
<path d="M464.5 387.300 H1172.5" stroke="#ccd6eb" stroke-width="1"/>
<path d="M548.7 387.300 V396.500 M637.2 387.300 V396.500 M725.7 387.300 V396.500 M814.2 387.300 V396.500 M902.7 387.300 V396.500 M991.2 387.300 V396.500 M1079.7 387.300 V396.500 M1168.2 387.300 V396.500" stroke="#ccd6eb" stroke-width="1"/>
<text x="549.4" y="417" font-size="11.200" fill="#8a8a8a" text-anchor="middle">12:00 pm</text>
<text x="637.9" y="417" font-size="11.200" fill="#8a8a8a" text-anchor="middle">3:00 pm</text>
<text x="726.4" y="417" font-size="11.200" fill="#8a8a8a" text-anchor="middle">6:00 pm</text>
<text x="814.9" y="417" font-size="11.200" fill="#8a8a8a" text-anchor="middle">9:00 pm</text>
<text x="903.4" y="417" font-size="11.200" fill="#8a8a8a" text-anchor="middle">31. Jan</text>
<text x="991.9" y="417" font-size="11.200" fill="#8a8a8a" text-anchor="middle">3:00 am</text>
<text x="1080.4" y="417" font-size="11.200" fill="#8a8a8a" text-anchor="middle">6:00 am</text>
<text x="1172.500" y="417" font-size="11.200" fill="#8a8a8a" text-anchor="end">9:00 am</text>
<rect x="433.700" y="459.300" width="716" height="11.300" fill="#fff" stroke="#d9dde2" stroke-width="1.500"/>
<path d="M509.4 471 V474.500 M606.7 471 V474.500 M704.0 471 V474.500 M801.3 471 V474.500 M898.6 471 V474.500 M995.9 471 V474.500 M1093.2 471 V474.500" stroke="#ccd6eb" stroke-width="1"/>
<text x="509.7" y="486.600" font-size="10" fill="#8a8a8a" text-anchor="middle">25. Jan</text>
<text x="607.0" y="486.600" font-size="10" fill="#8a8a8a" text-anchor="middle">26. Jan</text>
<text x="704.3" y="486.600" font-size="10" fill="#8a8a8a" text-anchor="middle">27. Jan</text>
<text x="801.6" y="486.600" font-size="10" fill="#8a8a8a" text-anchor="middle">28. Jan</text>
<text x="898.9" y="486.600" font-size="10" fill="#8a8a8a" text-anchor="middle">29. Jan</text>
<text x="996.2" y="486.600" font-size="10" fill="#8a8a8a" text-anchor="middle">30. Jan</text>
<text x="1093.5" y="486.600" font-size="10" fill="#8a8a8a" text-anchor="middle">31. Jan</text>
<rect x="1040" y="459" width="108.500" height="12" fill="#fff" stroke="#007960" stroke-width="2"/>
<rect x="1038.200" y="457.300" width="3.500" height="15.300" rx="0.300" fill="#9ccbbd" stroke="#007960" stroke-width="1.800"/>
<rect x="1146" y="457.300" width="3.500" height="15.300" rx="0.300" fill="#9ccbbd" stroke="#007960" stroke-width="1.800"/>
<rect x="1158.200" y="457.800" width="12" height="14.300" fill="#007960"/><path d="M1160.300 459.500 L1161.300 470.500 L1162.800 461 L1164 470.500 L1165 459.500 M1164.800 459.500 L1165.800 470.500 L1167.300 461 L1168.500 470.500 L1169.500 459.500" stroke="#fff" stroke-width="1.100" fill="none" stroke-linejoin="round"/>
</svg>
<svg style="left:416px;top:428px" width="10" height="14" viewBox="0 0 10 14" fill="none" stroke="#007960" stroke-width="2"><path d="M5 0 V12 M1 7.500 L5 12 L9 7.500" stroke-linejoin="round"/></svg>
<div class="t g" style="left:434px;top:428.500px;font-size:11.300px;letter-spacing:-0.080px">30/1/2025 <span style="position:absolute;left:52.600px;top:0.400px;font-size:10.700px;letter-spacing:-0.200px">9:08 AM </span><span style="position:absolute;left:96.500px;top:0.900px;font-size:10.400px;letter-spacing:-0.550px">PST</span></div>
<svg style="left:679.500px;top:428px" width="15" height="14" viewBox="0 0 15 14" fill="#007960"><path d="M7.500 0 V14 L0 7Z M15 0 V14 L7.500 7Z"/></svg>
<svg style="left:708.500px;top:428px" width="9" height="14" viewBox="0 0 9 14" fill="#007960"><path d="M9 0 V14 L0 7Z"/></svg>
<div class="t g" style="left:750px;top:428.700px;font-size:10.800px">1 day</div>
<svg style="left:809.500px;top:428px" width="9" height="14" viewBox="0 0 9 14" fill="#007960"><path d="M0 0 V14 L9 7Z"/></svg>
<svg style="left:832.500px;top:428px" width="15" height="14" viewBox="0 0 15 14" fill="#007960"><path d="M0 0 V14 L7.500 7Z M7.500 0 V14 L15 7Z"/></svg>
<svg style="left:860.500px;top:428px" width="11" height="14" viewBox="0 0 11 14" fill="#007960"><path d="M0 0 V14 L8 7Z M8 0 H10.500 V14 H8Z"/></svg>
<svg style="left:885.500px;top:429px" width="13" height="12" viewBox="0 0 13 12" fill="none" stroke="#007960" stroke-width="2"><path d="M1.500 5 A5 4.500 0 0 1 10.500 3 M11.500 7 A5 4.500 0 0 1 2.500 9"/><path d="M8 4 H12 V0Z M5 8 H1 V12Z" fill="#007960" stroke="none"/></svg>
<svg style="left:910.500px;top:428px" width="17" height="14" viewBox="0 0 17 14" fill="none" stroke="#007960" stroke-width="1.300"><path d="M5 2.500 H3 A2.300 2.300 0 0 0 3 8 H5 M3 0.500 V3 M8 0.500 V3"/><rect x="6.300" y="5" width="10" height="8.400" rx="1" fill="#fff"/><path d="M6.300 6 H16.300" stroke-width="2"/><path d="M9 3.500 V5 M13.500 3.500 V5"/></svg>
<div class="t g" style="left:1058px;top:428.500px;font-size:11.300px;letter-spacing:-0.080px">31/1/2025 <span style="position:absolute;left:52.600px;top:0.400px;font-size:10.700px;letter-spacing:-0.200px">9:08 AM </span><span style="position:absolute;left:96.500px;top:0.900px;font-size:10.400px;letter-spacing:-0.550px">PST</span></div>
<div class="hl" style="left:408px;top:448px;width:774px;background:#e2e4e6"></div>
<svg style="left:416.500px;top:493.500px" width="10" height="14" viewBox="0 0 10 14" fill="none" stroke="#007960" stroke-width="2"><path d="M5 14 V2 M1 6.500 L5 2 L9 6.500" stroke-linejoin="round"/></svg>
<div class="t g" style="left:434px;top:495.600px;font-size:11.300px;letter-spacing:-0.080px">24/1/2025</div>
<div class="t g" style="left:786px;top:495.800px;font-size:10.800px">7 days</div>
<div class="t g" style="left:1120px;top:495.600px;font-size:11.300px;letter-spacing:-0.080px">31/1/2025</div>
<div class="hl" style="left:408px;top:510px;width:774px;height:2.500px;background:#e2e4e6"></div>
<!--/RIGHT-->
<!--DETAILS-->
<div id="dtabs" class="abs" style="left:408px;top:512.500px;width:774px;height:31.500px">
<div class="tab" style="left:4px;top:2.500px;width:86px;height:29px"></div>
<svg style="left:11.500px;top:8.500px" width="17" height="13" viewBox="0 0 17 13" fill="none" stroke="#007960" stroke-width="1.400"><path d="M0.700 0 V12.300 H16.500"/><path d="M3.500 9.500 V5.500 L6 3 L8.500 5 L11 2.500 L13.500 5.500 V9.500Z" stroke-linejoin="round"/></svg>
<div class="t tabtxt" style="left:34px;top:7.500px;font-size:15.600px;color:#3a3a3a">Details</div>
<svg style="left:757.500px;top:7px" width="16" height="16" viewBox="0 0 16 16" fill="none" stroke="#007960" stroke-width="1.500" stroke-linecap="round" stroke-linejoin="round"><path d="M9.500 6.500 L15 1 M10.500 1 H15 V5.500 M6.500 9.500 L1 15 M1 10.500 V15 H5.500"/></svg>
</div>
<div class="abs" style="left:408px;top:544px;width:774px;height:26.500px;background:#f6f7f8"></div>
<div class="abs" style="left:1087.500px;top:546.500px;width:93px;height:21px;background:#fff;border:1px solid #dfe1e3;border-radius:3px"></div>
<svg style="left:1093.500px;top:550px" width="17" height="14" viewBox="0 0 17 14" fill="none" stroke="#333" stroke-width="1.200"><circle cx="4.500" cy="4.500" r="3.300" stroke-dasharray="1.700 0.900" stroke-width="1.600"/><circle cx="4.500" cy="4.500" r="1" /><circle cx="12" cy="9" r="3.600" stroke-dasharray="1.900 0.900" stroke-width="1.600"/><circle cx="12" cy="9" r="1.100"/></svg>
<div class="t" style="left:1120px;top:552px;font-size:11.800px;color:#333">Customize</div>
<!-- header row -->
<svg style="left:446.5px;top:577.5px" width="14" height="13" viewBox="0 0 14 13"><path d="M13.300 0.700 C9.300 0.300 6.600 2 4.800 5.200 L4.600 8 L5.800 9.300 L8.600 8.900 C11.800 7.200 13.700 4.500 13.300 0.700Z" fill="#fff" stroke="#007960" stroke-width="1.500" stroke-linejoin="round"/><path d="M5.200 4 L2 4.600 L0.200 7.500 L4.300 7.800Z" fill="#007960"/><path d="M9.500 8.600 L9 12 L6.200 13 L6 9.300Z" fill="#007960"/><path d="M1 9.800 L3.700 8.700 L5 10.300 L2 12.400Z" fill="#007960"/><path d="M4.600 8 L5.800 9.300 L8.600 8.900 C9.500 8.400 10.300 7.800 11 7 L6 3.300 C5.500 3.900 5.100 4.500 4.800 5.200Z" fill="#007960"/></svg>
<svg style="left:472.5px;top:581px" width="9" height="9" viewBox="0 0 9 9" stroke="#555" stroke-width="1.200"><path d="M0.500 0.500 L8.500 8.500 M8.500 0.500 L0.500 8.500"/></svg>
<div class="abs" style="left:490px;top:579.2px;width:12px;height:12px;border:1.300px solid #444;border-radius:1px;background:#fff"></div>
<svg style="left:538.5px;top:580px" width="9" height="11" viewBox="0 0 9 11" fill="none" stroke="#444" stroke-width="1.150"><path d="M0.800 4.500 L4.500 0.800 L8.200 4.500Z M0.800 6.500 L4.500 10.200 L8.200 6.500Z"/></svg>
<div class="t" style="left:562.500px;top:579.500px;font-size:12.300px;font-weight:700;color:#333;letter-spacing:-0.100px">Name</div>
<svg style="left:601.5px;top:580px" width="9" height="11" viewBox="0 0 9 11" fill="none" stroke="#444" stroke-width="1.150"><path d="M0.800 4.500 L4.500 0.800 L8.200 4.500Z M0.800 6.500 L4.500 10.200 L8.200 6.500Z"/></svg>
<div class="t" style="left:981.500px;top:579px;font-size:12.300px;font-weight:700;color:#333;letter-spacing:-0.300px">Asset</div>
<svg style="left:1017px;top:579.5px" width="9" height="11" viewBox="0 0 9 11" fill="none" stroke="#444" stroke-width="1.150"><path d="M0.800 4.500 L4.500 0.800 L8.200 4.500Z M0.800 6.500 L4.500 10.200 L8.200 6.500Z"/></svg>
<div class="t" style="left:1048.500px;top:579px;font-size:12.300px;font-weight:700;color:#007960;letter-spacing:-0.200px">Lane</div>
<svg style="left:1081px;top:579.500px" width="9" height="6" viewBox="0 0 9 6" fill="none" stroke="#007960" stroke-width="1.400"><path d="M0.800 5 L4.500 1 L8.200 5Z"/></svg>
<svg style="left:1145px;top:575.500px" width="18" height="15" viewBox="0 0 18 15" fill="none" stroke="#999" stroke-width="0.900"><rect x="0.500" y="0.500" width="14" height="11"/><rect x="9" y="0.500" width="5.500" height="11" fill="#bbb"/><path d="M0.500 4.200 H9 M0.500 7.800 H9"/><circle cx="13.500" cy="11" r="3" fill="#333" stroke="none"/><path d="M12 11 h3 M13.500 9.500 v3" stroke="#fff" stroke-width="0.900"/></svg>
<div class="hl" style="left:408px;top:596.500px;width:770px;background:#e6ebf0"></div>
<div class="abs" style="left:408px;top:597px;width:770px;height:23.8px;background:#f8f8f8"></div>
<div class="abs" style="left:424.400px;top:602.5px;width:3.600px;height:3.600px;border-radius:50%;background:#007960;box-shadow:0 4.900px 0 #007960,0 9.800px 0 #007960"></div>
<svg style="left:446px;top:602.6px" width="14" height="13" viewBox="0 0 14 13"><path d="M13.300 0.700 C9.300 0.300 6.600 2 4.800 5.200 L4.600 8 L5.800 9.300 L8.600 8.900 C11.800 7.200 13.700 4.500 13.300 0.700Z" fill="#fff" stroke="#007960" stroke-width="1.500" stroke-linejoin="round"/><path d="M5.200 4 L2 4.600 L0.200 7.500 L4.300 7.800Z" fill="#007960"/><path d="M9.500 8.600 L9 12 L6.200 13 L6 9.300Z" fill="#007960"/><path d="M1 9.800 L3.700 8.700 L5 10.300 L2 12.400Z" fill="#007960"/><path d="M4.600 8 L5.800 9.300 L8.600 8.900 C9.500 8.400 10.300 7.800 11 7 L6 3.300 C5.500 3.900 5.100 4.500 4.800 5.200Z" fill="#007960"/></svg>
<svg style="left:472px;top:604.4px" width="9" height="9" viewBox="0 0 9 9" stroke="#007960" stroke-width="1.200"><path d="M0.500 0.500 L8.500 8.500 M8.500 0.500 L0.500 8.500"/></svg>
<div class="abs" style="left:490.5px;top:603.1px;width:12px;height:12px;border:1.300px solid #444;border-radius:1px;background:#fff"></div>
<svg style="left:510px;top:600.1px" width="16" height="14" viewBox="0 0 16 14" fill="none" stroke="#00a2dd" stroke-width="1.800" stroke-linejoin="round" stroke-linecap="round"><path d="M1 8.500 L3.500 1.200 L7 10.500 L9.500 4.500 L12 12.500 L14.800 9"/></svg>
<div class="t" style="left:562.500px;top:602.54px;font-size:12px;font-weight:700;color:#3a3a3a">value</div>
<div class="t g" style="left:981.300px;top:602.91px;font-size:11.800px;text-decoration:underline;letter-spacing:-0.150px">Gauge</div>
<div class="t" style="left:1060px;width:28.700px;text-align:right;top:603.56px;font-size:10.800px;color:#333">1</div>
<div class="abs" style="left:408px;top:620.8px;width:770px;height:23.1px;background:#fff"></div>
<div class="abs" style="left:424.400px;top:625.6px;width:3.600px;height:3.600px;border-radius:50%;background:#007960;box-shadow:0 4.900px 0 #007960,0 9.800px 0 #007960"></div>
<svg style="left:446px;top:625.7px" width="14" height="13" viewBox="0 0 14 13"><path d="M13.300 0.700 C9.300 0.300 6.600 2 4.800 5.200 L4.600 8 L5.800 9.300 L8.600 8.900 C11.800 7.200 13.700 4.500 13.300 0.700Z" fill="#fff" stroke="#007960" stroke-width="1.500" stroke-linejoin="round"/><path d="M5.200 4 L2 4.600 L0.200 7.500 L4.300 7.800Z" fill="#007960"/><path d="M9.500 8.600 L9 12 L6.200 13 L6 9.300Z" fill="#007960"/><path d="M1 9.800 L3.700 8.700 L5 10.300 L2 12.400Z" fill="#007960"/><path d="M4.600 8 L5.800 9.300 L8.600 8.900 C9.500 8.400 10.300 7.800 11 7 L6 3.300 C5.500 3.900 5.100 4.500 4.800 5.200Z" fill="#007960"/></svg>
<svg style="left:472px;top:627.5px" width="9" height="9" viewBox="0 0 9 9" stroke="#007960" stroke-width="1.200"><path d="M0.500 0.500 L8.500 8.500 M8.500 0.500 L0.500 8.500"/></svg>
<div class="abs" style="left:490.5px;top:626.2px;width:12px;height:12px;border:1.300px solid #444;border-radius:1px;background:#fff"></div>
<svg style="left:510px;top:623.2px" width="16" height="14" viewBox="0 0 16 14" fill="none" stroke="#e1498e" stroke-width="1.800" stroke-linejoin="round" stroke-linecap="round"><path d="M1 8.500 L3.500 1.200 L7 10.500 L9.500 4.500 L12 12.500 L14.800 9"/></svg>
<div class="t" style="left:562.500px;top:625.64px;font-size:12px;font-weight:700;color:#3a3a3a">count</div>
<div class="t g" style="left:981.300px;top:626.01px;font-size:11.800px;text-decoration:underline;letter-spacing:-0.150px">Timer</div>
<div class="t" style="left:1060px;width:28.700px;text-align:right;top:626.66px;font-size:10.800px;color:#333">2</div>
<div class="abs" style="left:408px;top:643.9px;width:770px;height:22.1px;background:#f8f8f8"></div>
<div class="abs" style="left:424.400px;top:648.3px;width:3.600px;height:3.600px;border-radius:50%;background:#007960;box-shadow:0 4.900px 0 #007960,0 9.800px 0 #007960"></div>
<svg style="left:446px;top:648.4px" width="14" height="13" viewBox="0 0 14 13"><path d="M13.300 0.700 C9.300 0.300 6.600 2 4.800 5.200 L4.600 8 L5.800 9.300 L8.600 8.900 C11.800 7.200 13.700 4.500 13.300 0.700Z" fill="#fff" stroke="#007960" stroke-width="1.500" stroke-linejoin="round"/><path d="M5.200 4 L2 4.600 L0.200 7.500 L4.300 7.800Z" fill="#007960"/><path d="M9.500 8.600 L9 12 L6.200 13 L6 9.300Z" fill="#007960"/><path d="M1 9.800 L3.700 8.700 L5 10.300 L2 12.400Z" fill="#007960"/><path d="M4.600 8 L5.800 9.300 L8.600 8.900 C9.500 8.400 10.300 7.800 11 7 L6 3.300 C5.500 3.900 5.100 4.500 4.800 5.200Z" fill="#007960"/></svg>
<svg style="left:472px;top:650.2px" width="9" height="9" viewBox="0 0 9 9" stroke="#007960" stroke-width="1.200"><path d="M0.500 0.500 L8.500 8.500 M8.500 0.500 L0.500 8.500"/></svg>
<div class="abs" style="left:490.5px;top:648.9px;width:12px;height:12px;border:1.300px solid #444;border-radius:1px;background:#fff"></div>
<svg style="left:510px;top:645.9px" width="16" height="14" viewBox="0 0 16 14" fill="none" stroke="#9d6b4a" stroke-width="1.800" stroke-linejoin="round" stroke-linecap="round"><path d="M1 8.500 L3.500 1.200 L7 10.500 L9.500 4.500 L12 12.500 L14.800 9"/></svg>
<div class="t" style="left:562.500px;top:648.34px;font-size:12px;font-weight:700;color:#3a3a3a">value</div>
<div class="t g" style="left:981.300px;top:648.71px;font-size:11.800px;text-decoration:underline;letter-spacing:-0.150px">Gauge</div>
<div class="t" style="left:1060px;width:28.700px;text-align:right;top:649.36px;font-size:10.800px;color:#333">3</div>
<div class="abs" style="left:408px;top:666px;width:770px;height:23.3px;background:#fff"></div>
<div class="abs" style="left:424.400px;top:670.5px;width:3.600px;height:3.600px;border-radius:50%;background:#007960;box-shadow:0 4.900px 0 #007960,0 9.800px 0 #007960"></div>
<svg style="left:446px;top:670.6px" width="14" height="13" viewBox="0 0 14 13"><path d="M13.300 0.700 C9.300 0.300 6.600 2 4.800 5.200 L4.600 8 L5.800 9.300 L8.600 8.900 C11.800 7.200 13.700 4.500 13.300 0.700Z" fill="#fff" stroke="#007960" stroke-width="1.500" stroke-linejoin="round"/><path d="M5.200 4 L2 4.600 L0.200 7.500 L4.300 7.800Z" fill="#007960"/><path d="M9.500 8.600 L9 12 L6.200 13 L6 9.300Z" fill="#007960"/><path d="M1 9.800 L3.700 8.700 L5 10.300 L2 12.400Z" fill="#007960"/><path d="M4.600 8 L5.800 9.300 L8.600 8.900 C9.500 8.400 10.300 7.800 11 7 L6 3.300 C5.500 3.900 5.100 4.500 4.800 5.200Z" fill="#007960"/></svg>
<svg style="left:472px;top:672.4px" width="9" height="9" viewBox="0 0 9 9" stroke="#007960" stroke-width="1.200"><path d="M0.500 0.500 L8.500 8.500 M8.500 0.500 L0.500 8.500"/></svg>
<div class="abs" style="left:490.5px;top:671.1px;width:12px;height:12px;border:1.300px solid #444;border-radius:1px;background:#fff"></div>
<svg style="left:510px;top:668.1px" width="16" height="14" viewBox="0 0 16 14" fill="none" stroke="#b9573a" stroke-width="1.800" stroke-linejoin="round" stroke-linecap="round"><path d="M1 8.500 L3.500 1.200 L7 10.500 L9.500 4.500 L12 12.500 L14.800 9"/></svg>
<div class="t" style="left:562.500px;top:670.54px;font-size:12px;font-weight:700;color:#3a3a3a">value</div>
<div class="t g" style="left:981.300px;top:670.91px;font-size:11.800px;text-decoration:underline;letter-spacing:-0.150px">Gauge</div>
<div class="t" style="left:1060px;width:28.700px;text-align:right;top:671.56px;font-size:10.800px;color:#333">4</div>
<div class="abs" style="left:408px;top:689.300px;width:770px;height:1px;background:#f8f8f8"></div>
<div class="abs" style="left:1178px;top:570.500px;width:4px;height:119.500px;background:#d4d4d4"></div>
<div class="abs" style="left:1178px;top:570.500px;width:4px;height:62px;background:#8c8c8c;border-radius:2px 0 0 2px"></div>
<!--/DETAILS-->
</body>
</html>
